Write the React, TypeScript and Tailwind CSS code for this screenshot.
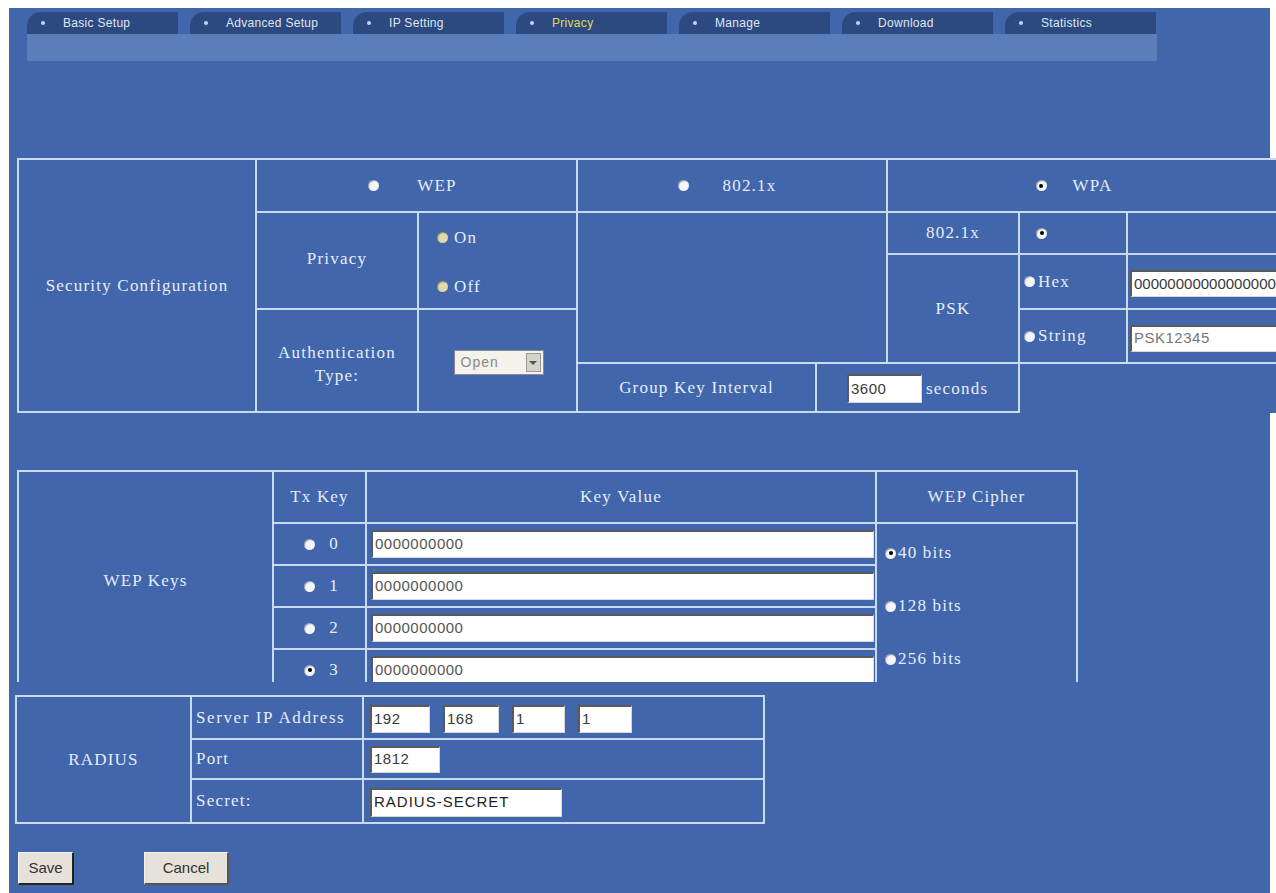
import React from "react";

const SERIF = "font-['Liberation_Serif',serif] text-[17px] text-[#e6edf8] tracking-[1.2px]";
const CELL = "bg-[#4166ab]";

function Radio({ checked = false, dim = false }: { checked?: boolean; dim?: boolean }) {
  return (
    <span
      className={`inline-flex h-[11px] w-[11px] shrink-0 items-center justify-center rounded-full ${
        dim ? "bg-[#e2d9a8]" : "bg-[#f4f6fa]"
      } shadow-[inset_1px_1px_1px_rgba(0,0,0,0.35)]`}
    >
      {checked && <span className="h-[4px] w-[4px] rounded-full bg-black" />}
    </span>
  );
}

function Field({ value, className }: { value: string; className: string }) {
  return (
    <div
      className={`flex items-center overflow-hidden whitespace-nowrap border-t-2 border-l-2 border-b border-r border-t-[#5a5a5a] border-l-[#5a5a5a] border-b-[#d8d8d8] border-r-[#d8d8d8] bg-white pl-[2px] font-['Liberation_Sans',sans-serif] text-[15px] tracking-[0.5px] text-[#3a3a3a] ${className}`}
    >
      {value}
    </div>
  );
}

const tabs = ["Basic Setup", "Advanced Setup", "IP Setting", "Privacy", "Manage", "Download", "Statistics"];

export default function App() {
  return (
    <div className="relative h-[893px] w-[1276px] overflow-hidden bg-white">
      <div className="ml-[9px] mt-[8px] flex h-[885px] w-[1261px] flex-col bg-[#4166ab]">
        {/* Tabs */}
        <div className="ml-[18px] mt-[4px] flex gap-[12px]">
          {tabs.map((t) => (
            <div
              key={t}
              className="flex h-[22px] w-[151px] items-center gap-[18px] rounded-tl-[14px] bg-[#2d4a80] pl-[14px] font-['Liberation_Sans',sans-serif] text-[12px] tracking-[0.3px]"
            >
              <span className="h-[4px] w-[4px] rounded-full bg-[#c8d4ea]" />
              <span className={t === "Privacy" ? "text-[#e2d85a]" : "text-[#dfe6f2]"}>{t}</span>
            </div>
          ))}
        </div>
        <div className="ml-[18px] h-[27px] w-[1130px] bg-[#5b7dba]" />

        {/* Security Configuration */}
        <div className="ml-[8px] mt-[97px] grid w-max grid-cols-[236px_160px_157px_237px_69px_130px_106px_160px] grid-rows-[51px_40px_53px_52px_47px] gap-[2px] bg-[#c6daf2] p-[2px]">
          <div className={`${CELL} col-start-1 row-span-5 row-start-1 flex items-center justify-center ${SERIF}`}>
            Security Configuration
          </div>
          <div className={`${CELL} col-span-2 col-start-2 row-start-1 flex items-center justify-center gap-[38px] pr-[8px] ${SERIF}`}>
            <Radio />
            <span>WEP</span>
          </div>
          <div className={`${CELL} col-span-2 col-start-4 row-start-1 flex items-center justify-center gap-[34px] pr-[10px] ${SERIF}`}>
            <Radio />
            <span>802.1x</span>
          </div>
          <div className={`${CELL} col-span-3 col-start-6 row-start-1 flex items-center justify-center gap-[26px] pr-[28px] ${SERIF}`}>
            <Radio checked />
            <span>WPA</span>
          </div>

          <div className={`${CELL} col-start-2 row-span-2 row-start-2 flex items-center justify-center pb-[4px] ${SERIF}`}>
            Privacy
          </div>
          <div className={`${CELL} col-start-3 row-span-2 row-start-2 flex flex-col justify-between pb-[9px] pl-[18px] pt-[12px] ${SERIF}`}>
            <div className="flex items-center gap-[6px]">
              <Radio dim />
              <span>On</span>
            </div>
            <div className="flex items-center gap-[6px]">
              <Radio dim />
              <span>Off</span>
            </div>
          </div>
          <div className={`${CELL} col-start-2 row-span-2 row-start-4 flex flex-col items-center justify-center pt-[6px] leading-[23px] ${SERIF}`}>
            <span>Authentication</span>
            <span>Type:</span>
          </div>
          <div className={`${CELL} col-start-3 row-span-2 row-start-4 flex items-center justify-center pl-[2px] pt-[4px]`}>
            <div className="flex h-[25px] w-[90px] items-center border border-[#8a8a8a] bg-[#f4f2ea]">
              <span className="flex-1 pl-[6px] font-['Liberation_Sans',sans-serif] text-[14px] tracking-[1px] text-[#8a8a8a]">Open</span>
              <span className="mr-[2px] flex h-[19px] w-[15px] items-center justify-center border border-[#9a9a9a] bg-[#d6d3c9]">
                <span className="h-0 w-0 border-x-[4px] border-t-[4px] border-x-transparent border-t-[#555]" />
              </span>
            </div>
          </div>

          <div className={`${CELL} col-span-2 col-start-4 row-span-3 row-start-2`} />

          <div className={`${CELL} col-start-6 row-start-2 flex items-center justify-center ${SERIF}`}>802.1x</div>
          <div className={`${CELL} col-start-7 row-start-2 flex items-center pl-[16px]`}>
            <Radio checked />
          </div>
          <div className={`${CELL} col-start-8 row-start-2`} />

          <div className={`${CELL} col-start-6 row-span-2 row-start-3 flex items-center justify-center ${SERIF}`}>PSK</div>
          <div className={`${CELL} col-start-7 row-start-3 flex items-center gap-[3px] pl-[4px] ${SERIF}`}>
            <Radio />
            <span>Hex</span>
          </div>
          <div className={`${CELL} col-start-8 row-start-3 flex items-center pl-[2px] pt-[4px]`}>
            <Field value="000000000000000000" className="h-[27px] w-[170px] shrink-0 tracking-[0px]" />
          </div>
          <div className={`${CELL} col-start-7 row-start-4 flex items-center gap-[3px] pl-[4px] ${SERIF}`}>
            <Radio />
            <span>String</span>
          </div>
          <div className={`${CELL} col-start-8 row-start-4 flex items-center pl-[2px] pt-[4px]`}>
            <Field value="PSK12345" className="h-[27px] w-[170px] shrink-0 text-[#777]" />
          </div>

          <div className={`${CELL} col-start-4 row-start-5 flex items-center justify-center ${SERIF}`}>Group Key Interval</div>
          <div className={`${CELL} col-span-2 col-start-5 row-start-5 flex items-center pl-[30px] pt-[2px]`}>
            <Field value="3600" className="h-[29px] w-[75px]" />
            <span className={`${SERIF} ml-[4px] text-[15px]`}>seconds</span>
          </div>
          <div className={`${CELL} col-span-2 col-start-7 row-start-5 -mb-[2px] -mr-[2px]`} />
        </div>

        {/* WEP Keys (cut off) */}
        <div className="ml-[8px] mt-[57px] h-[212px] overflow-hidden">
          <div className="grid w-max grid-cols-[253px_91px_508px_199px] grid-rows-[50px_40px_40px_40px_40px] gap-[2px] bg-[#c6daf2] p-[2px]">
            <div className={`${CELL} col-start-1 row-span-5 row-start-1 flex items-center justify-center ${SERIF}`}>WEP Keys</div>
            <div className={`${CELL} col-start-2 row-start-1 flex items-center justify-center ${SERIF}`}>Tx Key</div>
            <div className={`${CELL} col-start-3 row-start-1 flex items-center justify-center ${SERIF}`}>Key Value</div>
            <div className={`${CELL} col-start-4 row-start-1 flex items-center justify-center ${SERIF}`}>WEP Cipher</div>
            {[0, 1, 2, 3].map((i) => (
              <React.Fragment key={i}>
                <div
                  className={`${CELL} col-start-2 flex items-center justify-center gap-[14px] pl-[4px] ${SERIF} ${
                    i === 0 ? "row-start-2" : i === 1 ? "row-start-3" : i === 2 ? "row-start-4" : "row-start-5"
                  }`}
                >
                  <Radio checked={i === 3} />
                  <span>{i}</span>
                </div>
                <div
                  className={`${CELL} col-start-3 flex items-center pl-[4px] pr-[1px] ${
                    i === 0 ? "row-start-2" : i === 1 ? "row-start-3" : i === 2 ? "row-start-4" : "row-start-5"
                  }`}
                >
                  <Field value="0000000000" className="h-[28px] w-full text-[#555]" />
                </div>
              </React.Fragment>
            ))}
            <div className={`${CELL} col-start-4 row-span-4 row-start-2 flex flex-col gap-[33px] pl-[8px] pt-[19px] ${SERIF} text-[16px] leading-[20px]`}>
              <div className="flex items-center gap-[2px]">
                <Radio checked />
                <span>40 bits</span>
              </div>
              <div className="flex items-center gap-[2px]">
                <Radio />
                <span>128 bits</span>
              </div>
              <div className="flex items-center gap-[2px]">
                <Radio />
                <span>256 bits</span>
              </div>
            </div>
          </div>
        </div>

        {/* RADIUS */}
        <div className="ml-[6px] mt-[13px] grid w-max grid-cols-[173px_170px_399px] grid-rows-[41px_38px_42px] gap-[2px] bg-[#c6daf2] p-[2px]">
          <div className={`${CELL} col-start-1 row-span-3 row-start-1 flex items-center justify-center ${SERIF}`}>RADIUS</div>
          <div className={`${CELL} col-start-2 row-start-1 flex items-center whitespace-nowrap pl-[4px] ${SERIF} tracking-[1.6px]`}>Server IP Address</div>
          <div className={`${CELL} col-start-3 row-start-1 flex items-center gap-[13px] pl-[6px] pt-[2px]`}>
            <Field value="192" className="h-[28px] w-[60px]" />
            <Field value="168" className="h-[28px] w-[56px]" />
            <Field value="1" className="h-[28px] w-[53px]" />
            <Field value="1" className="h-[28px] w-[54px]" />
          </div>
          <div className={`${CELL} col-start-2 row-start-2 flex items-center pl-[4px] ${SERIF}`}>Port</div>
          <div className={`${CELL} col-start-3 row-start-2 flex items-center pl-[6px]`}>
            <Field value="1812" className="h-[27px] w-[70px]" />
          </div>
          <div className={`${CELL} col-start-2 row-start-3 flex items-center pl-[4px] ${SERIF}`}>Secret:</div>
          <div className={`${CELL} col-start-3 row-start-3 flex items-center pl-[6px] pt-[2px]`}>
            <Field value="RADIUS-SECRET" className="h-[29px] w-[192px] tracking-[1px] text-[#222]" />
          </div>
        </div>

        {/* Buttons */}
        <div className="ml-[9px] mt-[28px] flex gap-[70px]">
          <button className="h-[33px] w-[56px] border-t border-l border-b-2 border-r-2 border-t-[#f4f2ee] border-l-[#f4f2ee] border-b-[#222] border-r-[#222] bg-[#e6e2da] font-['Liberation_Sans',sans-serif] text-[15px] text-[#333]">
            Save
          </button>
          <button className="h-[33px] w-[85px] border-t border-l border-b-2 border-r-2 border-t-[#f4f2ee] border-l-[#f4f2ee] border-b-[#555] border-r-[#555] bg-[#e6e2da] font-['Liberation_Sans',sans-serif] text-[15px] text-[#333]">
            Cancel
          </button>
        </div>
      </div>
    </div>
  );
}
